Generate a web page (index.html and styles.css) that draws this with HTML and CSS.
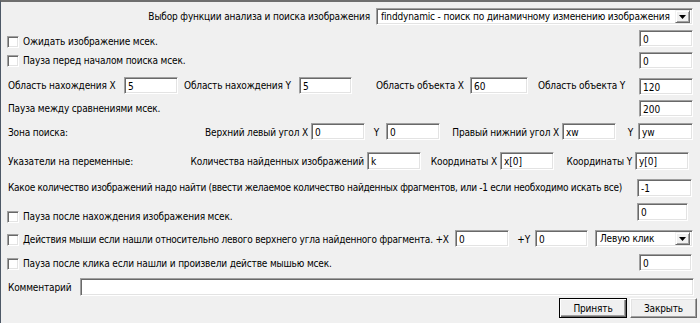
FILE: index.html
```html
<!DOCTYPE html>
<html lang="ru">
<head>
<meta charset="utf-8">
<title>Поиск изображения</title>
<link rel="stylesheet" href="styles.css">
</head>
<body>
<div class="win">
  <div class="row r1">
    <span class="lbl l-func">Выбор функции анализа и поиска изображения</span>
    <div class="combo c-func"><span class="ctext">finddynamic - поиск по динамичному изменению изображения</span><span class="arrow"><svg width="7" height="4" viewBox="0 0 7 4"><path d="M0 0H7L3.5 4Z" fill="#000"/></svg></span></div>
  </div>

  <div class="row r2">
    <label class="chk"><input type="checkbox" class="box"><span class="lbl">Ожидать изображение мсек.</span></label>
    <input class="edit e-col" type="text" value="0">
  </div>

  <div class="row r3">
    <label class="chk"><input type="checkbox" class="box"><span class="lbl">Пауза перед началом поиска мсек.</span></label>
    <input class="edit e-col" type="text" value="0">
  </div>

  <div class="row r4">
    <span class="lbl w-na">Область нахождения X</span>
    <input class="edit" type="text" value="5">
    <span class="lbl w-nb">Область нахождения Y</span>
    <input class="edit w53" type="text" value="5">
    <span class="lbl w-oa">Область объекта X</span>
    <input class="edit w58" type="text" value="60">
    <span class="lbl w-ob">Область объекта Y</span>
    <input class="edit e-low" type="text" value="120">
  </div>

  <div class="row r5">
    <span class="lbl first">Пауза между сравнениями мсек.</span>
    <input class="edit e-col" type="text" value="200">
  </div>

  <div class="row r6">
    <span class="lbl first w-zone">Зона поиска:</span>
    <span class="lbl rt w-tl">Верхний левый угол X</span>
    <input class="edit" type="text" value="0">
    <span class="lbl rt w-y1">Y</span>
    <input class="edit" type="text" value="0">
    <span class="lbl rt w-br">Правый нижний угол X</span>
    <input class="edit" type="text" value="xw">
    <span class="lbl rt w-y2">Y</span>
    <input class="edit w55" type="text" value="yw">
  </div>

  <div class="row r7">
    <span class="lbl first w-ptr">Указатели на переменные:</span>
    <span class="lbl rt w-cnt">Количества найденных изображений</span>
    <input class="edit" type="text" value="k">
    <span class="lbl rt w-cx">Координаты X</span>
    <input class="edit" type="text" value="x[0]">
    <span class="lbl rt w-cy">Координаты Y</span>
    <input class="edit" type="text" value="y[0]">
  </div>

  <div class="row r8">
    <span class="lbl first l-long">Какое количество изображений надо найти (ввести желаемое количество найденных фрагментов, или -1 если необходимо искать все)</span>
    <input class="edit e-n1" type="text" value="-1">
  </div>

  <div class="row r9">
    <label class="chk"><input type="checkbox" class="box"><span class="lbl">Пауза после нахождения изображения мсек.</span></label>
    <input class="edit e-p9" type="text" value="0">
  </div>

  <div class="row r10">
    <label class="chk w-act"><input type="checkbox" class="box"><span class="lbl l-act">Действия мыши если нашли относительно левого верхнего угла найденного фрагмента. +X</span></label>
    <input class="edit" type="text" value="0">
    <span class="lbl rt w-py">+Y</span>
    <input class="edit w53" type="text" value="0">
    <div class="combo c-click"><span class="ctext">Левую клик</span><span class="arrow"><svg width="7" height="4" viewBox="0 0 7 4"><path d="M0 0H7L3.5 4Z" fill="#000"/></svg></span></div>
  </div>

  <div class="row r11">
    <label class="chk"><input type="checkbox" class="box"><span class="lbl">Пауза после клика если нашли и произвели действе мышью мсек.</span></label>
    <input class="edit e-p11" type="text" value="0">
  </div>

  <div class="row r12">
    <span class="lbl first w-com">Комментарий</span>
    <input class="edit e-com" type="text" value="">
  </div>

  <div class="row r13">
    <button class="btn btn-default" type="button">Принять</button>
    <button class="btn" type="button">Закрыть</button>
  </div>
</div>
</body>
</html>
```

FILE: styles.css
```css
* { box-sizing: border-box; }
html, body { margin: 0; padding: 0; }
body {
  width: 700px;
  height: 323px;
  overflow: hidden;
  background: #f0f0f0;
  font-family: "DejaVu Sans Condensed", "Liberation Sans", Arial, sans-serif;
  font-size: 10px;
  letter-spacing: -0.15px;
  color: #000;
}
.win {
  width: 700px;
  height: 323px;
  border-top: 2px solid #6e6e6e;
  border-left: 1px solid #4d5866;
  background: #f0f0f0;
}
.row { display: flex; align-items: flex-start; }

.lbl { line-height: 13px; white-space: nowrap; display: block; flex: none; }
.rt { display: flex; justify-content: flex-end; padding-right: 3px; }
.first { margin-left: 7px; }
.l-long { letter-spacing: -0.3px; }
.l-act { letter-spacing: -0.22px; }

.edit {
  appearance: none;
  -webkit-appearance: none;
  display: block;
  flex: none;
  width: 54px;
  height: 17px;
  margin: 0;
  padding: 1px 0 0 3px;
  font-family: "DejaVu Sans Condensed", "Liberation Sans", Arial, sans-serif;
  font-size: 10px;
  line-height: 13px;
  color: #000;
  background: #fff;
  border-style: solid;
  border-width: 1px;
  border-color: #a0a0a0 #ffffff #ffffff #a0a0a0;
  box-shadow: inset 1px 1px 0 #696969, inset -1px -1px 0 #e3e3e3;
  outline: none;
  border-radius: 0;
  vertical-align: top;
}
.w53 { width: 53px; }
.w55 { width: 55px; }
.w58 { width: 58px; }
.e-col { margin-left: auto; margin-right: 7px; }

/* checkbox */
.chk { display: flex; align-items: center; margin-left: 6px; gap: 4px; flex: none; }
.box {
  appearance: none;
  -webkit-appearance: none;
  width: 12px;
  height: 12px;
  margin: 0;
  background: #fff;
  border-style: solid;
  border-width: 1px;
  border-color: #a0a0a0 #ffffff #ffffff #a0a0a0;
  box-shadow: inset 1px 1px 0 #696969, inset -1px -1px 0 #e3e3e3;
  border-radius: 0;
  flex: none;
}

/* combo */
.combo {
  display: flex;
  align-items: center;
  flex: none;
  height: 17px;
  background: #fff;
  border-style: solid;
  border-width: 1px;
  border-color: #a0a0a0 #ffffff #ffffff #a0a0a0;
  box-shadow: inset 1px 1px 0 #696969, inset -1px -1px 0 #e3e3e3;
  padding: 2px 2px 2px 4px;
}
.ctext { flex: 1; line-height: 13px; white-space: nowrap; overflow: hidden; }
.arrow {
  flex: none;
  width: 15px;
  height: 13px;
  display: flex;
  align-items: center;
  justify-content: center;
  background: #f0f0f0;
  border-style: solid;
  border-width: 1px;
  border-color: #f0f0f0 #696969 #696969 #f0f0f0;
  box-shadow: inset 1px 1px 0 #ffffff, inset -1px -1px 0 #a0a0a0;
}
.arrow svg { display: block; }

/* rows */
.r1 { height: 26px; }
.r1 .l-func { width: 369px; text-align: right; margin-top: 8px; }
.c-func { width: 317px; margin-left: 6px; margin-top: 6px; }

.r2 { height: 22px; }
.r2 .chk { margin-top: 7px; }
.r2 .edit { margin-top: 2px; }

.r3 { height: 24px; }
.r3 .chk { margin-top: 4px; }
.r3 .edit { margin-top: 2px; }

.r4 { height: 24px; }
.r4 .lbl { margin-top: 5px; }
.r4 .edit { margin-top: 3px; }
.r4 .e-low { margin-top: 4px; }
.w-na { width: 116px; margin-left: 7px; }
.w-nb { width: 115px; margin-left: 6px; }
.w-oa { width: 94px; margin-left: 24px; }
.w-ob { width: 101px; margin-left: 10px; }

.r5 { height: 23px; }
.r5 .lbl { margin-top: 4px; }
.r5 .edit { margin-top: 2px; }

.r6 { height: 26px; }
.r6 .lbl { margin-top: 5px; }
.r6 .edit { margin-top: 2px; }
.w-zone { width: 197px; }
.w-tl { width: 106px; }
.w-y1 { width: 21px; padding-right: 7px; }
.w-br { width: 122px; }
.w-y2 { width: 22px; padding-right: 5px; }

.r7 { height: 27px; }
.r7 .lbl { margin-top: 8px; }
.r7 .edit { margin-top: 5px; height: 18px; }
.w-ptr { width: 185px; }
.w-cnt { width: 174px; }
.w-cx { width: 79px; }
.w-cy { width: 81px; }

.r8 { height: 26px; }
.r8 .lbl { margin-top: 7px; }
.e-n1 { margin-left: auto; margin-right: 8px; margin-top: 5px; width: 55px; height: 18px; }

.r9 { height: 26px; }
.r9 .chk { margin-top: 10px; }
.e-p9 { margin-left: auto; margin-right: 12px; margin-top: 3px; width: 51px; height: 18px; }

.r10 { height: 25px; }
.r10 .chk { margin-top: 7px; }
.w-act { width: 448px; }
.r10 .edit { margin-top: 4px; }
.w-py { width: 26px; margin-top: 7px; padding-right: 5px; }
.c-click { width: 98px; margin-left: 7px; margin-top: 4px; }

.r11 { height: 24px; }
.r11 .chk { margin-top: 6px; }
.e-p11 { margin-left: auto; margin-right: 8px; margin-top: 3px; width: 53px; }

.r12 { height: 22px; }
.r12 .lbl { margin-top: 6px; }
.w-com { width: 72px; }
.e-com { width: 614px; height: 18px; margin-top: 3px; }

.r13 { height: 26px; justify-content: flex-end; gap: 3px; padding-right: 3px; }
.btn {
  appearance: none;
  -webkit-appearance: none;
  margin-top: 1px;
  height: 20px;
  width: 67px;
  padding: 0;
  font-family: "DejaVu Sans Condensed", "Liberation Sans", Arial, sans-serif;
  font-size: 10px;
  letter-spacing: -0.15px;
  color: #000;
  background: #f0f0f0;
  border-style: solid;
  border-width: 1px;
  border-color: #ffffff #696969 #696969 #ffffff;
  box-shadow: inset -1px -1px 0 #a0a0a0, inset 1px 1px 0 #e3e3e3;
  border-radius: 0;
}
.btn-default {
  width: 68px;
  border: 1px solid #000;
  box-shadow: inset 1px 1px 0 #ffffff, inset -1px -1px 0 #696969, inset -2px -2px 0 #a0a0a0;
}
```
